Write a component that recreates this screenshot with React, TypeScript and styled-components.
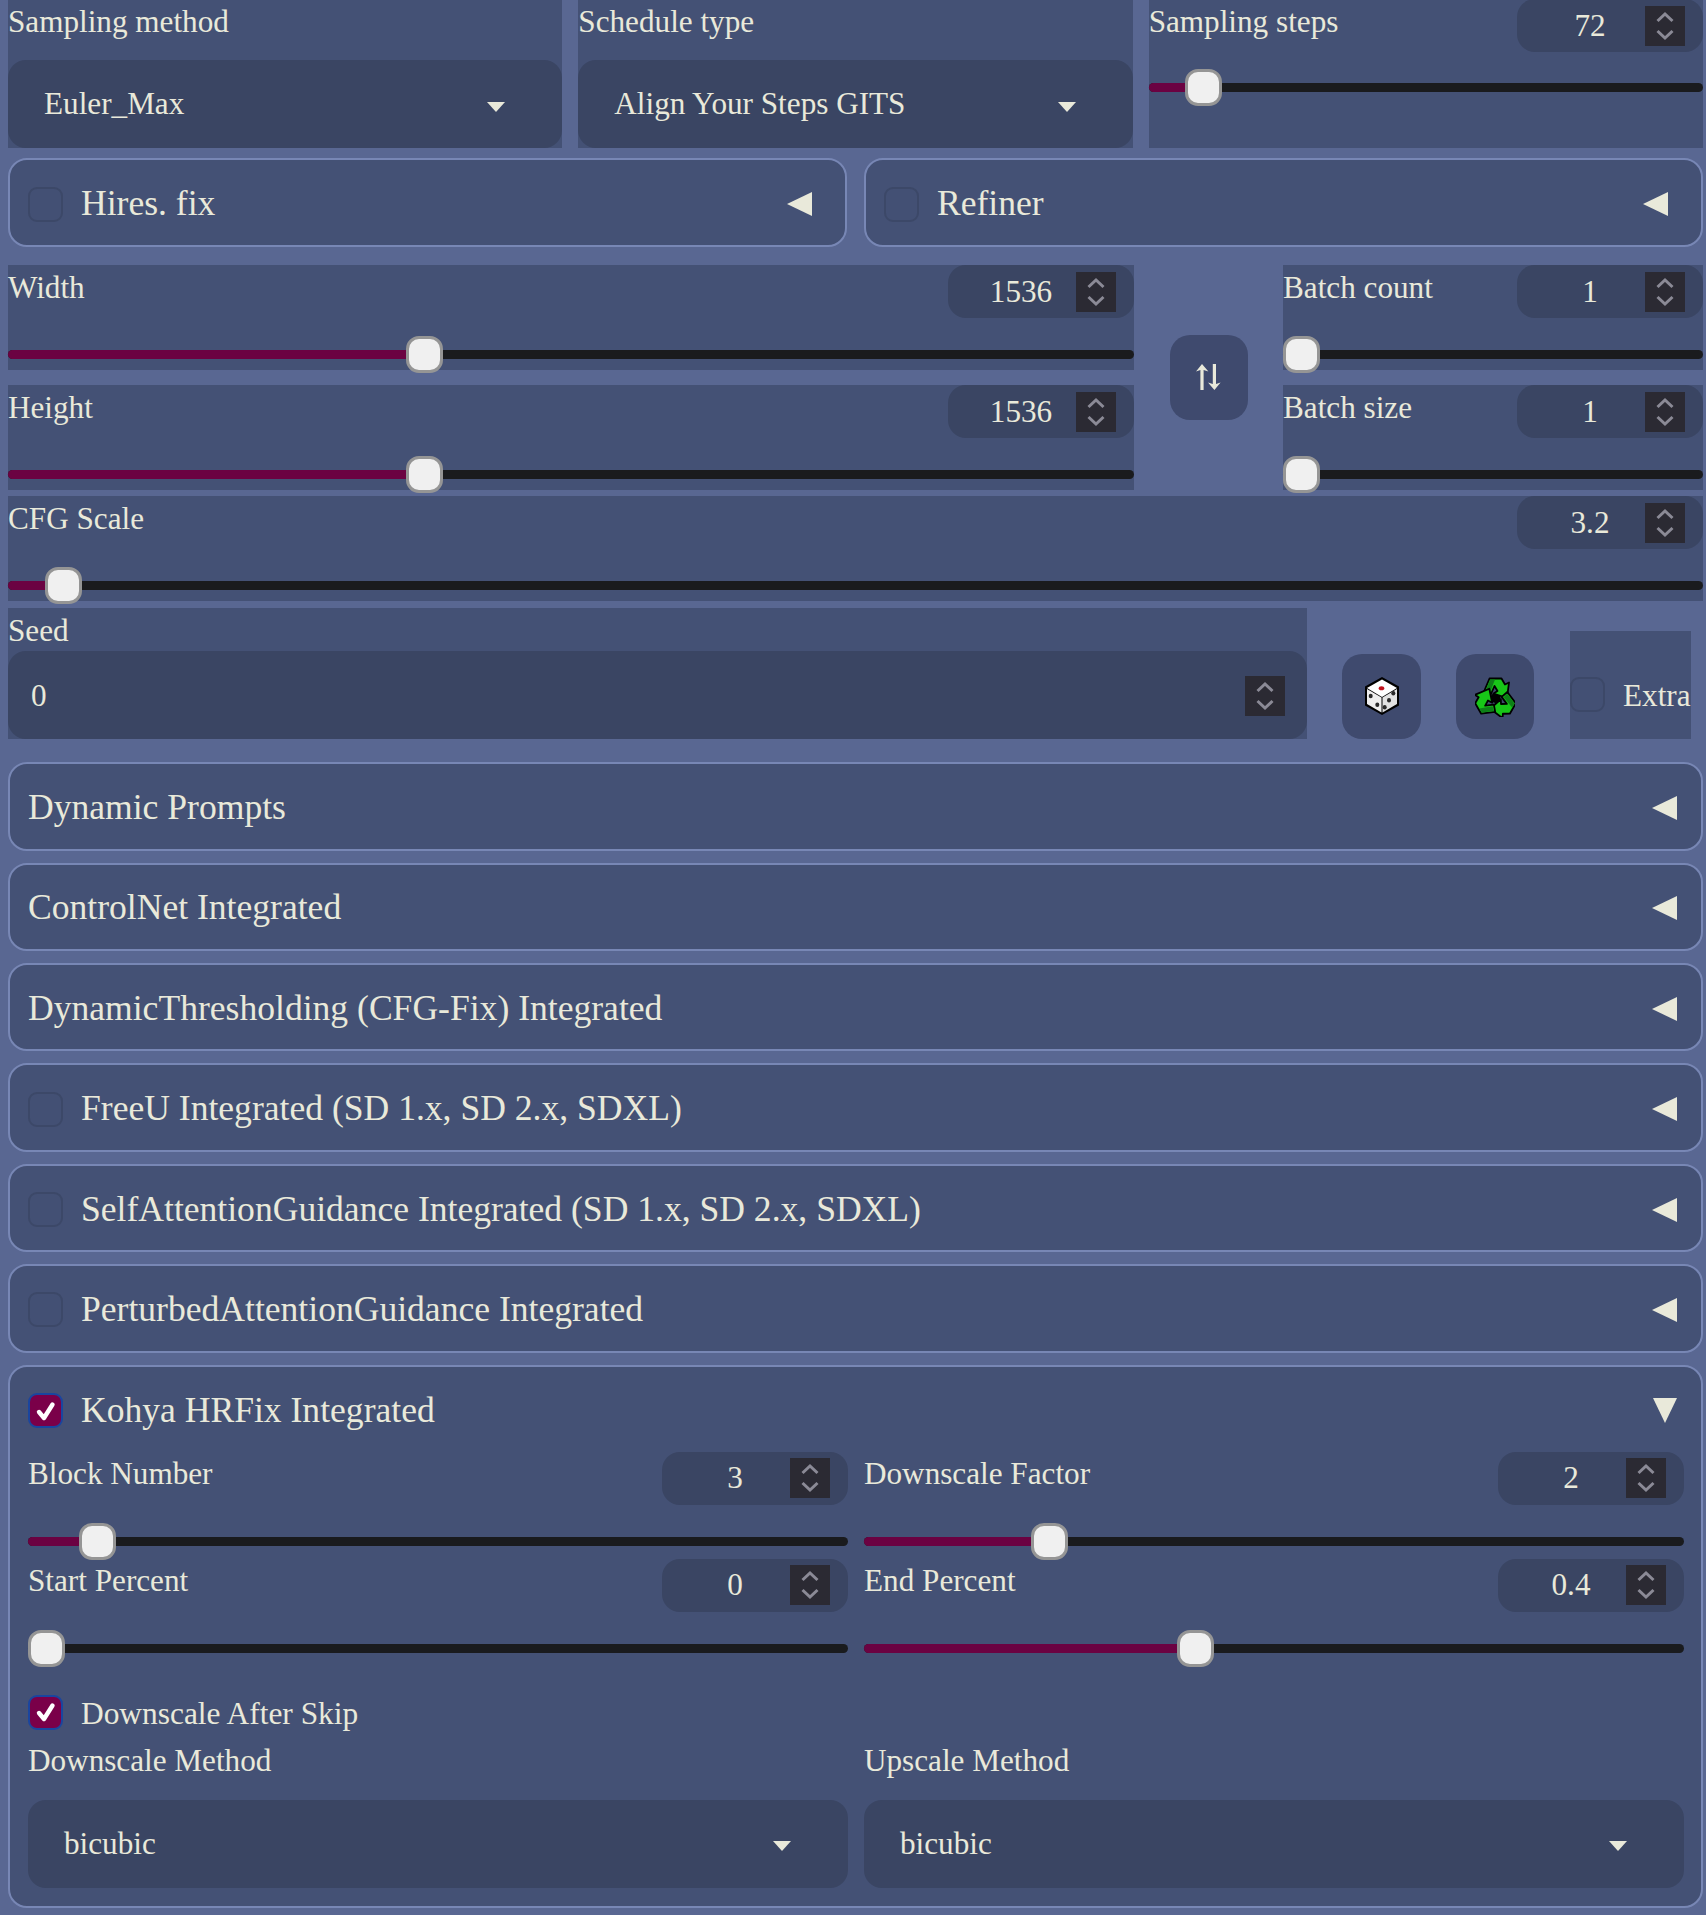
import React from "react";
import styled, { createGlobalStyle } from "styled-components";

const C = {
  page: "#596792",
  panel: "#445175",
  input: "#3a4563",
  button: "#3f4a6e",
  text: "#e9e9da",
  border: "#7887b5",
  track: "#1a1b1e",
  fill: "#6b0242",
  spin: "#2b2a33",
};

const Global = createGlobalStyle`
  html, body { margin: 0; padding: 0; background: ${C.page}; }
  body { font-family: "Liberation Serif", "Times New Roman", serif; color: ${C.text}; overflow: hidden; }
  * { box-sizing: border-box; }
`;

const Page = styled.div`
  width: 1706px;
  height: 1915px;
  overflow: hidden;
  padding: 0 3px 0 8px;
  background: ${C.page};
`;
const Stack = styled.div`
  margin-top: -1px;
  display: flex;
  flex-direction: column;
`;

const TopRow = styled.div`
  display: grid;
  grid-template-columns: repeat(3, 1fr);
  gap: 16px;
  height: 149px;
  margin-bottom: 10px;
`;
const TwinRow = styled.div`
  display: grid;
  grid-template-columns: 1fr 1fr;
  gap: 17px;
  margin-bottom: 18px;
`;
const SizeRow = styled.div`
  display: grid;
  grid-template-columns: 1126px 149px 420px;
  margin-bottom: 6px;
`;
const SizeColumn = styled.div`
  display: flex;
  flex-direction: column;
  gap: 15px;
`;
const SwapCell = styled.div`
  display: flex;
  align-items: center;
  justify-content: center;
`;
const SeedRow = styled.div`
  display: flex;
  align-items: flex-end;
  margin: 7px 0 23.3px;
`;
const AccordionList = styled.div`
  display: flex;
  flex-direction: column;
  gap: 12px;
`;

const Label = styled.div`
  font-size: 31.2px;
  line-height: 37px;
  padding-top: 3.5px;
  white-space: nowrap;
`;

const SliderBox = styled.div<{ $height: number; $bare?: boolean }>`
  height: ${(p) => p.$height}px;
  background: ${(p) => (p.$bare ? "transparent" : C.panel)};
`;
const SliderHead = styled.div`
  display: flex;
  justify-content: space-between;
  height: 53px;
`;
const NumberBox = styled.div`
  width: 186px;
  height: 53px;
  display: flex;
  align-items: center;
  padding: 0 18px 0 18px;
  background: ${C.input};
  border-radius: 18px;
  font-size: 31.2px;
`;
const NumberValue = styled.div`
  flex: 1;
  text-align: center;
`;
const SpinBox = styled.div`
  width: 40px;
  height: 40px;
  background: ${C.spin};
  flex: none;
`;
const Track = styled.div<{ $top: number }>`
  position: relative;
  height: 9px;
  margin-top: ${(p) => p.$top}px;
  background: ${C.track};
  border-radius: 5px;
`;
const Fill = styled.div<{ $value: number }>`
  height: 100%;
  width: calc(${(p) => p.$value} * (100% - 37px) + 18px);
  background: ${C.fill};
  border-radius: 5px 0 0 5px;
`;
const Thumb = styled.div<{ $value: number }>`
  position: absolute;
  top: -14px;
  left: calc(${(p) => p.$value} * (100% - 37px));
  width: 37px;
  height: 37px;
  background: #f0f0f0;
  border: 3px solid #959595;
  border-radius: 13px;
`;

const SelectField = styled.div<{ $height: number; $gap: number }>`
  height: ${(p) => p.$height}px;
  display: flex;
  flex-direction: column;
  background: ${C.panel};
  ${Label} {
    height: ${(p) => p.$gap}px;
  }
`;
const SelectBox = styled.div`
  height: 88px;
  display: flex;
  align-items: center;
  justify-content: space-between;
  padding: 0 57px 0 36px;
  background: ${C.input};
  border-radius: 18px;
  font-size: 31.2px;
`;
const Caret = styled.div`
  width: 0;
  height: 0;
  margin-top: 5px;
  border-left: 9.5px solid transparent;
  border-right: 9.5px solid transparent;
  border-top: 10px solid ${C.text};
`;

const Accordion = styled.div<{ $height?: number }>`
  ${(p) => (p.$height ? `height: ${p.$height}px;` : "")}
  background: ${C.panel};
  border: 2px solid ${C.border};
  border-radius: 19px;
`;
const AccordionHead = styled.div<{ $inset: number; $height: number }>`
  height: ${(p) => p.$height}px;
  display: flex;
  align-items: center;
  padding: 0 ${(p) => p.$inset}px 0 18px;
  font-size: 35.6px;
  white-space: nowrap;
`;
const HeadText = styled.div`
  flex: 1;
  padding-top: 1px;
`;
const ArrowLeft = styled.div`
  width: 0;
  height: 0;
  margin-top: 3px;
  border-top: 12.5px solid transparent;
  border-bottom: 12.5px solid transparent;
  border-right: 25px solid ${C.text};
`;
const ArrowDown = styled.div`
  width: 0;
  height: 0;
  margin-top: 3px;
  border-left: 12.5px solid transparent;
  border-right: 12.5px solid transparent;
  border-top: 25px solid ${C.text};
`;
const CheckBox = styled.div<{ $checked?: boolean }>`
  flex: none;
  width: 35px;
  height: 35px;
  display: flex;
  align-items: center;
  justify-content: center;
  margin-top: 3px;
  border-radius: 9px;
  background: ${(p) => (p.$checked ? "#7a0049" : "#435074")};
  border: 2px solid ${(p) => (p.$checked ? "#1a459f" : "#3c4868")};
`;
const CheckGap = styled.div`
  width: 18px;
  flex: none;
`;

const KohyaBody = styled.div`
  padding: 0 18px 18px;
`;
const KohyaGrid = styled.div`
  display: grid;
  grid-template-columns: 820px 820px;
  gap: 0 16px;
`;
const SkipRow = styled.div`
  height: 73px;
  padding-top: 26px;
  display: flex;
  align-items: flex-start;
  font-size: 31.4px;
  line-height: 40px;
`;
const SkipText = styled.div`
  padding-top: 2px;
`;

const SeedBox = styled.div`
  width: 1299px;
  height: 131px;
  background: ${C.panel};
`;
const SeedLabel = styled(Label)`
  height: 43px;
`;
const SeedInput = styled.div`
  height: 88px;
  display: flex;
  align-items: center;
  justify-content: space-between;
  padding: 1px 22px 0 23px;
  background: ${C.input};
  border-radius: 18px;
  font-size: 31.2px;
`;
const ToolButton = styled.div<{ $width: number; $left: number }>`
  width: ${(p) => p.$width}px;
  margin-left: ${(p) => p.$left}px;
  height: 85px;
  padding-bottom: 1px;
  display: flex;
  align-items: center;
  justify-content: center;
  background: ${C.button};
  border-radius: 20px;
`;
const ExtraBox = styled.div`
  width: 121px;
  height: 108px;
  margin-left: 36px;
  padding-bottom: 27px;
  display: flex;
  align-items: flex-end;
  background: ${C.panel};
  font-size: 31.2px;
  line-height: 35px;
`;
const ExtraCheck = styled(CheckBox)`
  margin-top: 0;
`;
const ExtraText = styled.div`
  margin-left: 18px;
  position: relative;
  top: 1px;
`;

const Spinner = () => (
  <SpinBox>
    <svg width="40" height="40" viewBox="0 0 40 40" fill="none" stroke="#8b8a96" strokeWidth="3">
      <polyline points="12.5,15 20,8 27.5,15" />
      <polyline points="12.5,25 20,32 27.5,25" />
    </svg>
  </SpinBox>
);

const Check = () => (
  <svg width="24" height="24" viewBox="0 0 24 24" fill="none" stroke="#fff" strokeWidth="4.4" strokeLinecap="round" strokeLinejoin="round">
    <polyline points="5,13 10,19 18.5,5.5" />
  </svg>
);

const Slider = ({ label, num, value, height = 105, top = 32, bare }: { label: string; num: string; value: number; height?: number; top?: number; bare?: boolean }) => (
  <SliderBox $height={height} $bare={bare}>
    <SliderHead>
      <Label>{label}</Label>
      <NumberBox>
        <NumberValue>{num}</NumberValue>
        <Spinner />
      </NumberBox>
    </SliderHead>
    <Track $top={top}>
      <Fill $value={value} />
      <Thumb $value={value} />
    </Track>
  </SliderBox>
);

const Select = ({ label, value, height, gap }: { label: string; value: string; height: number; gap: number }) => (
  <SelectField $height={height} $gap={gap}>
    <Label>{label}</Label>
    <SelectBox>
      {value}
      <Caret />
    </SelectBox>
  </SelectField>
);

const Head = ({ text, check, inset = 24, open, checked, height = 84.4 }: { text: string; check?: boolean; inset?: number; open?: boolean; checked?: boolean; height?: number }) => (
  <AccordionHead $inset={inset} $height={height}>
    {check && (
      <>
        <CheckBox $checked={checked}>{checked && <Check />}</CheckBox>
        <CheckGap />
      </>
    )}
    <HeadText>{text}</HeadText>
    {open ? <ArrowDown /> : <ArrowLeft />}
  </AccordionHead>
);

const Dice = () => (
  <svg width="36" height="40" viewBox="0 0 36 40">
    <polygon points="18,1 35,10.5 35,29.5 18,39 1,29.5 1,10.5" fill="#000" />
    <polygon points="3,12 18,3.5 33,12 18,21" fill="#fff" />
    <polygon points="3,13 17.5,21.5 17.5,36.5 3,28" fill="#eeeeee" />
    <polygon points="33,13 18.5,21.5 18.5,36.5 33,28" fill="#e2e2e2" />
    <ellipse cx="17.5" cy="12.3" rx="2.8" ry="2" fill="#c0101c" />
    <g fill="#2a2a2a">
      <ellipse cx="6.7" cy="20" rx="2" ry="2.2" />
      <ellipse cx="13.3" cy="28.7" rx="2" ry="2.2" />
      <ellipse cx="20.7" cy="31.3" rx="2" ry="2.2" />
      <ellipse cx="25" cy="24.3" rx="2" ry="2.2" />
      <ellipse cx="29.3" cy="17.3" rx="2" ry="2.2" />
    </g>
  </svg>
);

const RecycleArrow = () => (
  <g>
    <polygon points="9,15.5 14.5,2.5 26.5,2.5 30,8.5 34,6.5 32,22 18.5,17.5 22.5,15 19.5,10 16,18" fill="#18c618" stroke="#000" strokeWidth="1.8" strokeLinejoin="round" />
    <polygon points="10.5,15 15.3,3.6 20,3.6 15.2,16" fill="#0e7f18" />
  </g>
);

const Recycle = () => (
  <svg width="40" height="41" viewBox="0 0 40 41">
    <circle cx="20.5" cy="22" r="5" fill="#000" />
    <RecycleArrow />
    <g transform="rotate(120 20.5 22.5)">
      <RecycleArrow />
    </g>
    <g transform="rotate(240 20.5 22.5)">
      <RecycleArrow />
    </g>
  </svg>
);

const Swap = () => (
  <svg width="25" height="26" viewBox="0 0 25 26" fill={C.text}>
    <rect x="4.4" y="3" width="3.2" height="23" />
    <polygon points="6,0 12.4,7.5 7.6,6 4.4,6 0,7.5" />
    <rect x="16.8" y="0" width="3.2" height="23" />
    <polygon points="18.4,26 12,18.5 16.8,20 20,20 24.6,18.5" />
  </svg>
);

export default function App() {
  return (
    <Page>
      <Global />
      <Stack>
        <TopRow>
          <Select label="Sampling method" value="Euler_Max" height={149} gap={61} />
          <Select label="Schedule type" value="Align Your Steps GITS" height={149} gap={61} />
          <Slider label="Sampling steps" num="72" value={0.0696} height={149} top={31} />
        </TopRow>
        <TwinRow>
          <Accordion $height={89}>
            <Head text="Hires. fix" check inset={33} height={85} />
          </Accordion>
          <Accordion $height={89}>
            <Head text="Refiner" check inset={33} height={85} />
          </Accordion>
        </TwinRow>
        <SizeRow>
          <SizeColumn>
            <Slider label="Width" num="1536" value={0.3655} />
            <Slider label="Height" num="1536" value={0.3655} />
          </SizeColumn>
          <SwapCell>
            <ToolButton $width={78} $left={0}>
              <Swap />
            </ToolButton>
          </SwapCell>
          <SizeColumn>
            <Slider label="Batch count" num="1" value={0} />
            <Slider label="Batch size" num="1" value={0} />
          </SizeColumn>
        </SizeRow>
        <Slider label="CFG Scale" num="3.2" value={0.0223} />
        <SeedRow>
          <SeedBox>
            <SeedLabel>Seed</SeedLabel>
            <SeedInput>
              0
              <Spinner />
            </SeedInput>
          </SeedBox>
          <ToolButton $width={79} $left={35}>
            <Dice />
          </ToolButton>
          <ToolButton $width={78} $left={35}>
            <Recycle />
          </ToolButton>
          <ExtraBox>
            <ExtraCheck />
            <ExtraText>Extra</ExtraText>
          </ExtraBox>
        </SeedRow>
        <AccordionList>
          <Accordion><Head text="Dynamic Prompts" /></Accordion>
          <Accordion><Head text="ControlNet Integrated" /></Accordion>
          <Accordion><Head text="DynamicThresholding (CFG-Fix) Integrated" /></Accordion>
          <Accordion><Head text="FreeU Integrated (SD 1.x, SD 2.x, SDXL)" check /></Accordion>
          <Accordion><Head text="SelfAttentionGuidance Integrated (SD 1.x, SD 2.x, SDXL)" check /></Accordion>
          <Accordion><Head text="PerturbedAttentionGuidance Integrated" check /></Accordion>
          <Accordion>
            <Head text="Kohya HRFix Integrated" check checked open inset={24} height={85} />
            <KohyaBody>
              <KohyaGrid>
                <Slider label="Block Number" num="3" value={0.0651} height={107} bare />
                <Slider label="Downscale Factor" num="2" value={0.2133} height={107} bare />
                <Slider label="Start Percent" num="0" value={0} height={107} bare />
                <Slider label="End Percent" num="0.4" value={0.3997} height={107} bare />
              </KohyaGrid>
              <SkipRow>
                <CheckBox $checked><Check /></CheckBox>
                <CheckGap />
                <SkipText>Downscale After Skip</SkipText>
              </SkipRow>
              <KohyaGrid>
                <Select label="Downscale Method" value="bicubic" height={149} gap={61} />
                <Select label="Upscale Method" value="bicubic" height={149} gap={61} />
              </KohyaGrid>
            </KohyaBody>
          </Accordion>
        </AccordionList>
      </Stack>
    </Page>
  );
}
